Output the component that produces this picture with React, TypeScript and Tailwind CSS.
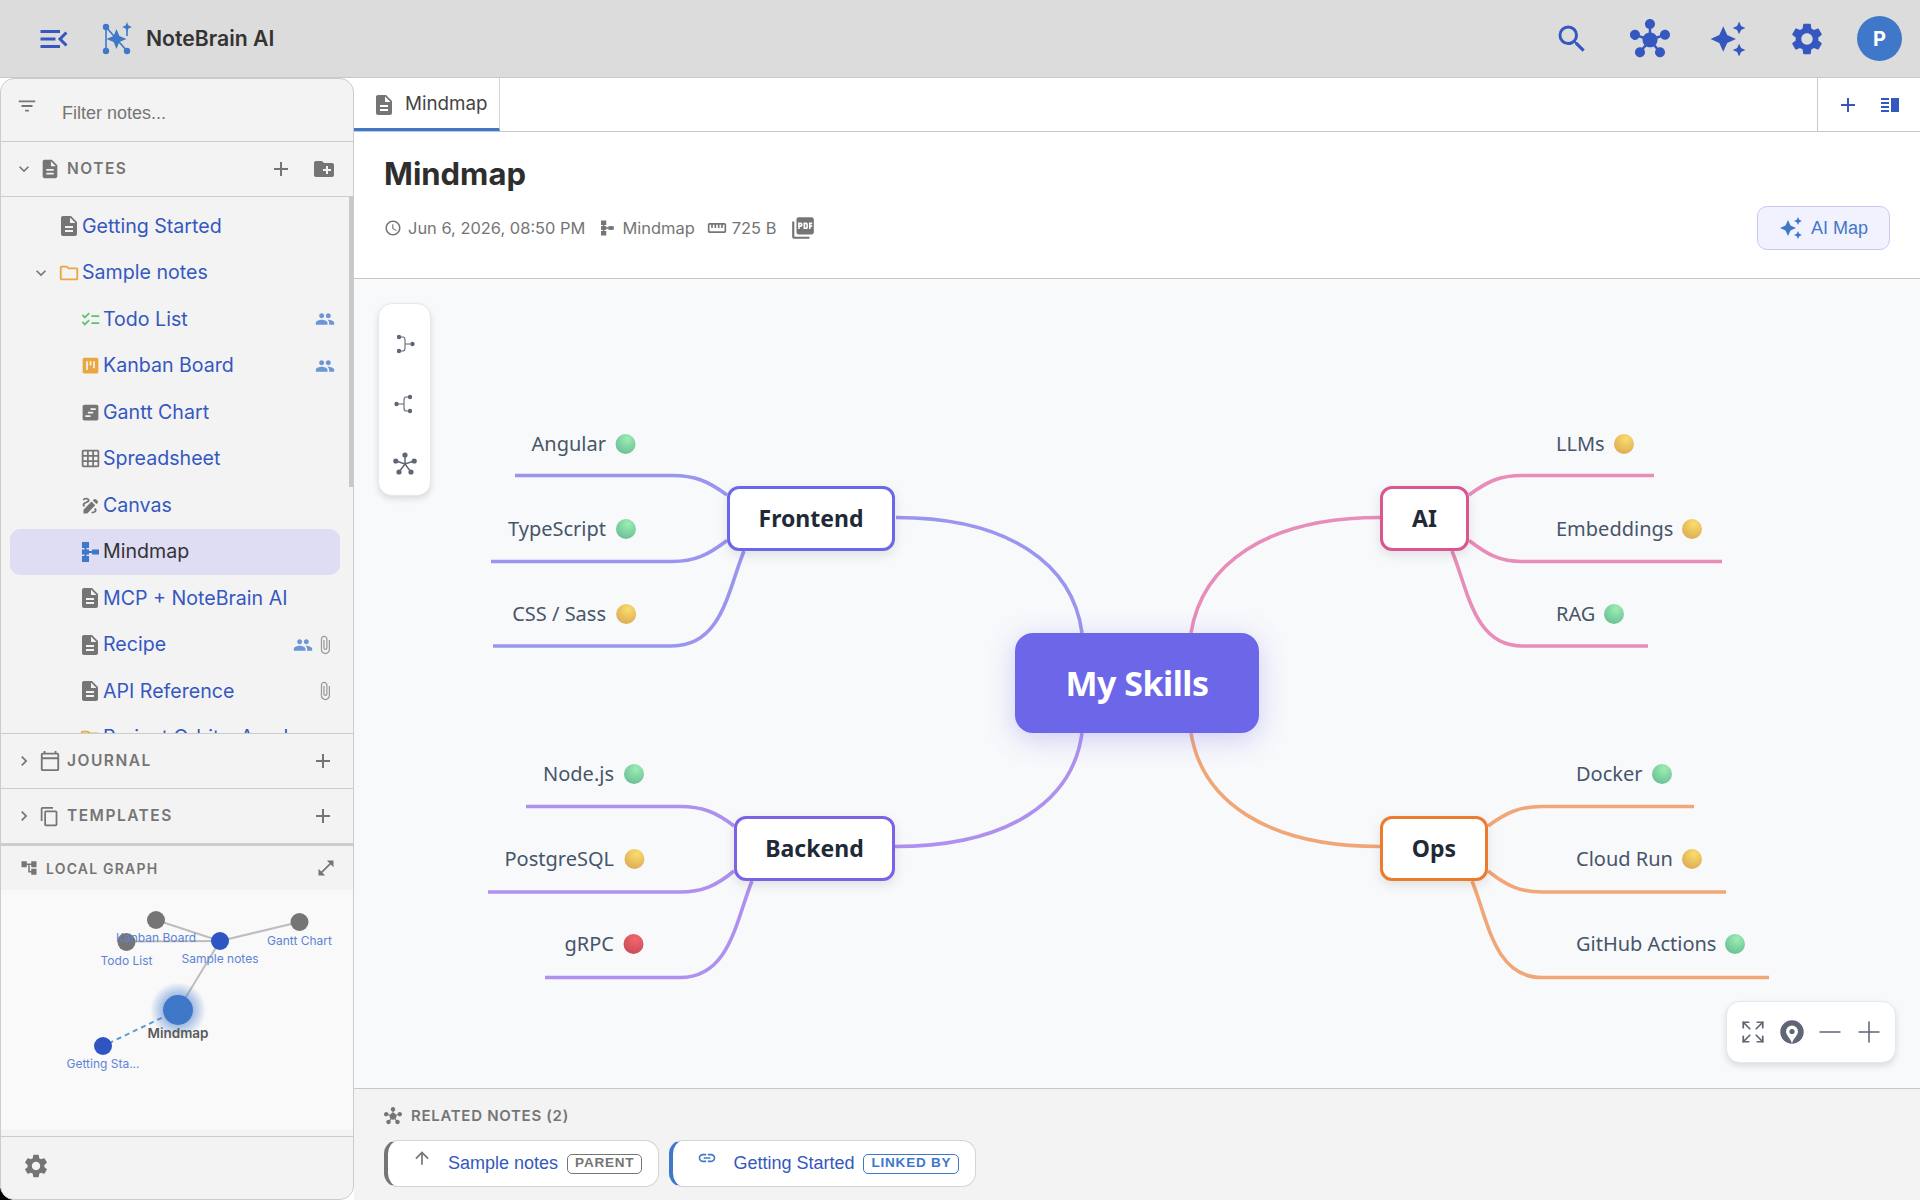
import type { ReactNode } from "react";
import {
  MdAccountTree,
  MdAdd,
  MdArrowUpward,
  MdAttachFile,
  MdAutoAwesome,
  MdChecklist,
  MdChevronRight,
  MdCreateNewFolder,
  MdDescription,
  MdDraw,
  MdExpandMore,
  MdFilterList,
  MdGridOn,
  MdHub,
  MdLink,
  MdMenuOpen,
  MdOpenInFull,
  MdOutlineCalendarToday,
  MdOutlineContentCopy,
  MdOutlineFolder,
  MdPeople,
  MdPictureAsPdf,
  MdSchedule,
  MdSearch,
  MdSettings,
  MdStraighten,
  MdVerticalSplit,
  MdViewKanban,
  MdViewTimeline,
} from "react-icons/md";
import { Expand, Minus, Plus } from "lucide-react";

const ORIGIN_X = 354;
const ORIGIN_Y = 279;

function MindmapIcon({ size = 24, className = "" }: { size?: number; className?: string }) {
  return (
    <svg width={size} height={size} viewBox="0 0 24 24" fill="currentColor" className={className}>
      <rect x="4" y="2" width="7" height="6" />
      <rect x="4" y="9.5" width="7" height="5" />
      <rect x="4" y="16" width="7" height="6" />
      <rect x="6.5" y="6" width="2" height="12" />
      <rect x="14" y="9.5" width="7" height="5" />
      <rect x="10" y="11" width="5" height="2" />
    </svg>
  );
}

function Logo() {
  return (
    <svg width="32" height="34" viewBox="0 0 32 34" className="text-[#3f78c9]">
      <g stroke="currentColor" strokeWidth="1.6" fill="none">
        <path d="M5 5V29" />
        <path d="M5 5L26 29" />
        <path d="M26 8V14" />
      </g>
      <g fill="currentColor">
        <circle cx="5" cy="5" r="3.2" />
        <circle cx="5" cy="29" r="3.2" />
        <circle cx="26" cy="29" r="3.2" />
        <path d="M15.5 7L18.4 14L25.5 17L18.4 20L15.5 27L12.6 20L5.5 17L12.6 14Z" />
        <path d="M26 0L27.4 3.6L31 5L27.4 6.4L26 10L24.6 6.4L21 5L24.6 3.6Z" />
      </g>
    </svg>
  );
}

function NoteRow({
  icon,
  label,
  indent,
  chevron,
  active,
  shared,
  attached,
}: {
  icon: ReactNode;
  label: string;
  indent: "top" | "sub";
  chevron?: boolean;
  active?: boolean;
  shared?: boolean;
  attached?: boolean;
}) {
  return (
    <div
      className={`relative mr-[13px] ml-[9px] flex h-[46.5px] shrink-0 items-center rounded-[10px] ${
        indent === "top" ? "pl-[47px]" : "pl-[68px]"
      } ${active ? "bg-[#dfddf3] text-[#333333]" : "text-[#3558c0]"}`}
    >
      {chevron && <MdExpandMore size={20} className="absolute left-[21px] text-[#757575]" />}
      <span className="flex w-[24px] shrink-0 justify-center">{icon}</span>
      <span className="ml-px whitespace-nowrap text-[19.6px]">{label}</span>
      <div className="ml-auto flex items-center pr-[5px]">
        {shared && <MdPeople size={20} className="text-[#6e96d6]" />}
        {attached && <MdAttachFile size={20} className="ml-[2px] text-[#9a9a9a]" />}
      </div>
    </div>
  );
}

function SectionHead({
  icon,
  label,
  open,
  children,
}: {
  icon: ReactNode;
  label: string;
  open?: boolean;
  children: ReactNode;
}) {
  return (
    <div className="flex h-[55px] shrink-0 items-center border-b border-[#cccccc] pr-[17px] pl-[13px] text-[#757575]">
      {open ? <MdExpandMore size={20} /> : <MdChevronRight size={20} />}
      <span className="ml-[5px] flex w-[28px] items-center">{icon}</span>
      <span className="text-[15.5px] font-semibold tracking-[1.5px]">{label}</span>
      <div className="ml-auto flex items-center">{children}</div>
    </div>
  );
}

function LocalGraph() {
  const gray = "#757575";
  const blue = "#2f55c2";
  const labels: [string, number, number][] = [
    ["Kanban Board", 155, 52],
    ["Todo List", 125.5, 74.5],
    ["Sample notes", 219, 73],
    ["Gantt Chart", 298.5, 55],
    ["Getting Sta...", 102, 178],
  ];
  return (
    <svg width="352" height="240" viewBox="0 0 352 240" className="[font-family:Inter,sans-serif]">
      <defs>
        <radialGradient id="glow">
          <stop offset="50%" stopColor="#3f78c9" stopOpacity="0.5" />
          <stop offset="100%" stopColor="#3f78c9" stopOpacity="0" />
        </radialGradient>
      </defs>
      <g stroke="#bdbdbd" strokeWidth="2">
        <line x1="155" y1="30" x2="219" y2="51" />
        <line x1="125.5" y1="51.5" x2="219" y2="51" />
        <line x1="298.5" y1="32" x2="219" y2="51" />
        <line x1="219" y1="51" x2="177" y2="120" />
      </g>
      <line x1="177" y1="120" x2="102" y2="156" stroke="#5b9bd5" strokeWidth="2" strokeDasharray="5 4" />
      <circle cx="177" cy="120" r="28" fill="url(#glow)" />
      <circle cx="155" cy="30" r="9" fill={gray} />
      <circle cx="125.5" cy="52" r="9" fill={gray} />
      <circle cx="298.5" cy="32" r="9" fill={gray} />
      <circle cx="219" cy="51" r="9" fill={blue} />
      <circle cx="102" cy="156" r="9" fill={blue} />
      <circle cx="177" cy="120" r="15" fill="#3f78c9" />
      {labels.map(([text, x, y]) => (
        <text key={text} x={x} y={y} textAnchor="middle" fontSize="12" fill="#5d83d6">
          {text}
        </text>
      ))}
      <text x="177" y="148" textAnchor="middle" fontSize="13.5" fontWeight="600" fill="#5a5a5a">
        Mindmap
      </text>
    </svg>
  );
}

function Sidebar() {
  return (
    <div className="relative w-[354px] shrink-0">
      <div className="absolute bottom-0 left-0 size-3 bg-black" />
      <aside className="relative flex h-full flex-col overflow-hidden rounded-[14px] border border-[#cccccc] bg-[#f3f3f3]">
        <div className="flex h-[63px] shrink-0 border-b border-[#cccccc] pl-[15px]">
          <MdFilterList size={22} className="mt-[16px] text-[#757575]" />
          <span className="mt-[21px] ml-[24px] text-[18px] leading-[26px] text-[#757575] [font-family:'Liberation_Sans',sans-serif]">
            Filter notes...
          </span>
        </div>
        <SectionHead icon={<MdDescription size={22} />} label="NOTES" open>
          <MdAdd size={24} className="mr-[19px]" />
          <MdCreateNewFolder size={24} />
        </SectionHead>
        <div className="relative flex min-h-0 flex-1 flex-col overflow-hidden pt-[6px]">
          <NoteRow indent="top" label="Getting Started" icon={<MdDescription size={24} className="text-[#757575]" />} />
          <NoteRow indent="top" chevron label="Sample notes" icon={<MdOutlineFolder size={22} className="text-[#eaa73f]" />} />
          <NoteRow indent="sub" shared label="Todo List" icon={<MdChecklist size={21} className="text-[#5cc26f]" />} />
          <NoteRow indent="sub" shared label="Kanban Board" icon={<MdViewKanban size={21} className="text-[#eaa73f]" />} />
          <NoteRow indent="sub" label="Gantt Chart" icon={<MdViewTimeline size={21} className="text-[#757575]" />} />
          <NoteRow indent="sub" label="Spreadsheet" icon={<MdGridOn size={21} className="text-[#757575]" />} />
          <NoteRow indent="sub" label="Canvas" icon={<MdDraw size={21} className="text-[#757575]" />} />
          <NoteRow indent="sub" active label="Mindmap" icon={<MindmapIcon className="text-[#3f78c9]" />} />
          <NoteRow indent="sub" label="MCP + NoteBrain AI" icon={<MdDescription size={24} className="text-[#757575]" />} />
          <NoteRow indent="sub" shared attached label="Recipe" icon={<MdDescription size={24} className="text-[#757575]" />} />
          <NoteRow indent="sub" attached label="API Reference" icon={<MdDescription size={24} className="text-[#757575]" />} />
          <NoteRow indent="sub" label="Project Orbit – Academy" icon={<MdOutlineFolder size={22} className="text-[#eaa73f]" />} />
          <div className="absolute top-0 right-0 h-[290px] w-[4px] bg-[#c8c8c8]" />
        </div>
        <div className="shrink-0 border-t border-[#cccccc]">
          <SectionHead icon={<MdOutlineCalendarToday size={22} />} label="JOURNAL">
            <MdAdd size={24} className="mr-px" />
          </SectionHead>
          <SectionHead icon={<MdOutlineContentCopy size={21} />} label="TEMPLATES">
            <MdAdd size={24} className="mr-px" />
          </SectionHead>
        </div>
        <div className="flex h-[46px] shrink-0 items-center border-t-2 border-[#cccccc] pr-[17px] pl-[19px] text-[#757575]">
          <MdAccountTree size={18} />
          <span className="ml-[8px] text-[14px] font-semibold tracking-[1.2px]">LOCAL GRAPH</span>
          <MdOpenInFull size={20} className="ml-auto" />
        </div>
        <div className="h-[240px] shrink-0 bg-[#f9f9f9]">
          <LocalGraph />
        </div>
        <div className="mt-[6px] flex h-[63px] shrink-0 items-center border-t border-[#cccccc] pb-[5px] pl-[21px] text-[#757575]">
          <MdSettings size={28} />
        </div>
      </aside>
    </div>
  );
}

type Leaf = { text: string; status: "ok" | "warn" | "bad"; x: number; y: number };

const DOTS = {
  ok: "bg-[radial-gradient(circle_at_60%_25%,#9ceeb4,#5fb48e)]",
  warn: "bg-[radial-gradient(circle_at_60%_25%,#f9de6c,#d89f50)]",
  bad: "bg-[radial-gradient(circle_at_60%_25%,#f0686c,#c24452)]",
};

// x is the right end of the text on the left side, the left start on the right side
const LEFT_LEAVES: Leaf[] = [
  { text: "Angular", status: "ok", x: 606, y: 444 },
  { text: "TypeScript", status: "ok", x: 606, y: 529 },
  { text: "CSS / Sass", status: "warn", x: 606, y: 614 },
  { text: "Node.js", status: "ok", x: 614, y: 774 },
  { text: "PostgreSQL", status: "warn", x: 614, y: 859 },
  { text: "gRPC", status: "bad", x: 614, y: 944 },
];

const RIGHT_LEAVES: Leaf[] = [
  { text: "LLMs", status: "warn", x: 1556, y: 444 },
  { text: "Embeddings", status: "warn", x: 1556, y: 529 },
  { text: "RAG", status: "ok", x: 1556, y: 614 },
  { text: "Docker", status: "ok", x: 1576, y: 774 },
  { text: "Cloud Run", status: "warn", x: 1576, y: 859 },
  { text: "GitHub Actions", status: "ok", x: 1576, y: 944 },
];

const BRANCHES = [
  { text: "Frontend", left: 727, top: 486, width: 168, border: "border-[#6c67e9]" },
  { text: "Backend", left: 734, top: 816, width: 161, border: "border-[#7d62e6]" },
  { text: "AI", left: 1380, top: 486, width: 89, border: "border-[#db5590]" },
  { text: "Ops", left: 1380, top: 816, width: 108, border: "border-[#ec7a2f]" },
];

const EDGES = [
  {
    color: "#9a95ef",
    paths: [
      "M1082 633C1073 565 1010 517.5 896 517.5",
      "M727 495C708 481 695 475.5 672 475.5L515 475.5",
      "M727 540.5C708 555 695 561.5 672 561.5L491 561.5",
      "M744 551C728 590 722 646 672 646L493 646",
    ],
  },
  {
    color: "#ae91ef",
    paths: [
      "M1082 733C1073 800 1010 846.5 895 846.5",
      "M734 826C716 812 702 806.5 680 806.5L526 806.5",
      "M734 871C716 886 702 892 680 892L488 892",
      "M752 881C736 920 730 977.5 680 977.5L545 977.5",
    ],
  },
  {
    color: "#e88cb9",
    paths: [
      "M1191 633C1202 565 1265 517.5 1380 517.5",
      "M1469 495C1488 481 1500 475.5 1522 475.5L1654 475.5",
      "M1469 540.5C1488 555 1500 561.5 1522 561.5L1722 561.5",
      "M1452 551C1468 590 1474 646 1522 646L1648 646",
    ],
  },
  {
    color: "#f1a677",
    paths: [
      "M1191 733C1202 800 1265 846.5 1380 846.5",
      "M1488 826C1507 812 1520 806.5 1542 806.5L1694 806.5",
      "M1488 871C1507 886 1520 892 1542 892L1726 892",
      "M1472 881C1488 920 1494 977.5 1542 977.5L1769 977.5",
    ],
  },
];

function StatusDot({ status }: { status: Leaf["status"] }) {
  return <span className={`size-[20px] shrink-0 rounded-full ${DOTS[status]}`} />;
}

function MindmapCanvas() {
  return (
    <div className="relative min-h-0 flex-1 overflow-hidden bg-[#f8f9fb] [font-family:'Noto_Sans',sans-serif]">
      <svg width="1566" height="809" viewBox={`${ORIGIN_X} ${ORIGIN_Y} 1566 809`} className="absolute inset-0" fill="none" strokeWidth="3.6">
        {EDGES.map((edge) =>
          edge.paths.map((d) => <path key={d} d={d} stroke={edge.color} />),
        )}
      </svg>

      <div
        className="absolute flex h-[100px] w-[244px] items-center justify-center rounded-[18px] bg-[#6c67e9] text-[34px] font-bold tracking-[-0.5px] text-white shadow-[0_6px_28px_rgba(108,103,233,0.3)]"
        style={{ left: 1015 - ORIGIN_X, top: 633 - ORIGIN_Y }}
      >
        My Skills
      </div>

      {BRANCHES.map((node) => (
        <div
          key={node.text}
          className={`absolute flex h-[65px] items-center justify-center rounded-[12px] border-[3px] bg-white text-[23px] font-bold text-[#1f2937] shadow-[0_4px_12px_rgba(0,0,0,0.1)] ${node.border}`}
          style={{ left: node.left - ORIGIN_X, top: node.top - ORIGIN_Y, width: node.width }}
        >
          {node.text}
        </div>
      ))}

      {LEFT_LEAVES.map((leaf) => (
        <div
          key={leaf.text}
          className="absolute flex h-[30px] -translate-x-full items-center whitespace-nowrap text-[20px] text-[#475569]"
          style={{ left: leaf.x + 30 - ORIGIN_X, top: leaf.y - 15 - ORIGIN_Y }}
        >
          <span className="mr-[10px]">{leaf.text}</span>
          <StatusDot status={leaf.status} />
        </div>
      ))}

      {RIGHT_LEAVES.map((leaf) => (
        <div
          key={leaf.text}
          className="absolute flex h-[30px] items-center whitespace-nowrap text-[20px] text-[#475569]"
          style={{ left: leaf.x - ORIGIN_X, top: leaf.y - 15 - ORIGIN_Y }}
        >
          <span className="mr-[9px]">{leaf.text}</span>
          <StatusDot status={leaf.status} />
        </div>
      ))}

      <div className="absolute top-[24px] left-[24px] flex h-[193px] w-[53px] flex-col items-center rounded-[14px] border border-[#e5e8f0] bg-white pt-[10px] text-[#5f6676] shadow-[0_3px_6px_rgba(0,0,0,0.12)]">
        <div className="flex h-[60px] items-center">
          <svg width="20" height="20" viewBox="0 0 20 20" fill="currentColor" className="ml-[2px]">
            <path d="M3 3H7C9 3 9 5 9 6V14C9 15 9 17 7 17H3M9 10H16" fill="none" stroke="currentColor" strokeWidth="1.1" />
            <circle cx="3" cy="3" r="2.2" />
            <circle cx="3" cy="17" r="2.2" />
            <circle cx="16.5" cy="10" r="2.2" />
          </svg>
        </div>
        <div className="flex h-[60px] items-center">
          <svg width="20" height="20" viewBox="0 0 20 20" fill="currentColor" className="-ml-[3px]">
            <path d="M17 3H13C11 3 11 5 11 6V14C11 15 11 17 13 17H17M11 10H4" fill="none" stroke="currentColor" strokeWidth="1.1" />
            <circle cx="17" cy="3" r="2.2" />
            <circle cx="17" cy="17" r="2.2" />
            <circle cx="3.5" cy="10" r="2.2" />
          </svg>
        </div>
        <div className="flex h-[60px] items-center">
          <svg width="24" height="24" viewBox="0 0 24 24" fill="currentColor">
            <path d="M12 3V12M3 9L12 12L21 9M6 20L12 12L18 20" fill="none" stroke="currentColor" strokeWidth="1.5" />
            <circle cx="12" cy="3" r="2.6" />
            <circle cx="2.8" cy="9" r="2.6" />
            <circle cx="21.2" cy="9" r="2.6" />
            <circle cx="6" cy="20" r="2.6" />
            <circle cx="18" cy="20" r="2.6" />
          </svg>
        </div>
      </div>

      <div className="absolute right-[24px] bottom-[25px] flex h-[62px] w-[170px] items-center rounded-[14px] border border-[#e5e8f0] bg-white px-[7px] text-[#5f6676] shadow-[0_3px_6px_rgba(0,0,0,0.12)]">
        <span className="flex w-[39px] justify-center">
          <Expand size={26} strokeWidth={1.6} />
        </span>
        <span className="flex w-[39px] justify-center">
          <svg width="24" height="24" viewBox="0 0 24 24" fill="currentColor">
            <circle cx="12" cy="12" r="11.7" />
            <path d="M12 5.5A6 6 0 0 1 18 11.5C18 15.5 13.5 18 12 23.5C10.5 18 6 15.5 6 11.5A6 6 0 0 1 12 5.5Z" fill="#ffffff" />
            <circle cx="12" cy="11.5" r="2.6" />
          </svg>
        </span>
        <span className="flex w-[39px] justify-center">
          <Minus size={34} strokeWidth={1.1} />
        </span>
        <span className="flex w-[39px] justify-center">
          <Plus size={34} strokeWidth={1.1} />
        </span>
      </div>
    </div>
  );
}

function RelatedChip({
  accent,
  icon,
  label,
  badge,
  badgeClass,
}: {
  accent: string;
  icon: ReactNode;
  label: string;
  badge: string;
  badgeClass: string;
}) {
  return (
    <div className={`flex h-[47px] items-center rounded-[14px] border border-l-4 border-y-[#d4d4d4] border-r-[#d4d4d4] bg-white pr-[16px] pl-[24px] ${accent}`}>
      <span className="-mt-[12px] w-[36px] text-[#757575]">{icon}</span>
      <span className="text-[18px] text-[#3558c0]">{label}</span>
      <span className={`ml-[9px] flex h-[20px] items-center rounded-[5px] border px-[7px] text-[13.5px] font-bold tracking-[0.8px] ${badgeClass}`}>
        {badge}
      </span>
    </div>
  );
}

export default function App() {
  return (
    <div className="flex h-screen w-screen flex-col overflow-hidden bg-white text-[#333333] [font-family:Inter,sans-serif]">
      <header className="flex h-[78px] shrink-0 items-center border-b border-[#c8c8c8] bg-[#dcdcdc] pr-[18px] pl-[36px] text-[#3558c0]">
        <MdMenuOpen size={36} />
        <span className="ml-[29px]">
          <Logo />
        </span>
        <span className="ml-[13px] text-[21.2px] font-semibold text-[#333333]">NoteBrain AI</span>
        <div className="ml-auto flex items-center">
          <MdSearch size={36} />
          <MdHub size={40} className="ml-[40px]" />
          <MdAutoAwesome size={38} className="ml-[39px]" />
          <MdSettings size={38} className="ml-[41px]" />
          <span className="ml-[31px] flex size-[45px] items-center justify-center rounded-full bg-[#3f78c9] text-[20px] font-bold text-white">
            P
          </span>
        </div>
      </header>

      <div className="flex min-h-0 flex-1">
        <Sidebar />
        <main className="flex min-w-0 flex-1 flex-col">
          <div className="flex h-[54px] shrink-0 border-b border-[#c8c8c8]">
            <div className="flex w-[146px] items-center border-r border-b-[3px] border-r-[#d4d4d4] border-b-[#3f78c9] pt-[3px] pl-[18px]">
              <MdDescription size={24} className="text-[#757575]" />
              <span className="ml-[9px] text-[18.8px] text-[#444444]">Mindmap</span>
            </div>
            <div className="ml-auto flex w-[103px] items-center border-l border-[#c8c8c8] pl-[18px] text-[#3558c0]">
              <MdAdd size={24} />
              <MdVerticalSplit size={24} className="ml-[18px]" />
            </div>
          </div>

          <div className="flex h-[147px] shrink-0 items-start justify-between border-b border-[#c8c8c8] pr-[30px] pl-[30px]">
            <div>
              <h1 className="mt-[20px] text-[31px] leading-[44px] font-bold text-[#2e2e2e]">Mindmap</h1>
              <div className="mt-[19px] flex items-center text-[16.45px] leading-[24px] text-[#757575]">
                <MdSchedule size={18} />
                <span className="ml-[6px]">Jun 6, 2026, 08:50 PM</span>
                <MindmapIcon size={18} className="ml-[13px]" />
                <span className="ml-[6px]">Mindmap</span>
                <MdStraighten size={20} className="ml-[12px]" />
                <span className="ml-[5px]">725 B</span>
                <MdPictureAsPdf size={26} className="ml-[14px]" />
              </div>
            </div>
            <button className="mt-[74px] flex h-[44px] w-[133px] items-center justify-center rounded-[10px] border border-[#c7caf6] bg-[#f1f2fd] text-[18px] text-[#3f78c9] [font-family:'Liberation_Sans',sans-serif]">
              <MdAutoAwesome size={24} className="mr-[8px]" />
              AI Map
            </button>
          </div>

          <MindmapCanvas />

          <section className="h-[112px] shrink-0 border-t border-[#c8c8c8] bg-[#f3f3f3] pl-[30px]">
            <div className="mt-[17px] flex h-[20px] items-center text-[15px] font-semibold tracking-[0.7px] text-[#757575]">
              <MdHub size={18} />
              <span className="ml-[9px]">RELATED NOTES (2)</span>
            </div>
            <div className="mt-[14px] flex gap-[10px] [font-family:'Liberation_Sans',sans-serif]">
              <RelatedChip
                accent="border-l-[#757575]"
                icon={<MdArrowUpward size={20} />}
                label="Sample notes"
                badge="PARENT"
                badgeClass="border-[#757575] text-[#757575]"
              />
              <RelatedChip
                accent="border-l-[#3f78c9]"
                icon={<MdLink size={20} className="text-[#3f78c9]" />}
                label="Getting Started"
                badge="LINKED BY"
                badgeClass="border-[#3f78c9] text-[#3f78c9]"
              />
            </div>
          </section>
        </main>
      </div>
    </div>
  );
}
